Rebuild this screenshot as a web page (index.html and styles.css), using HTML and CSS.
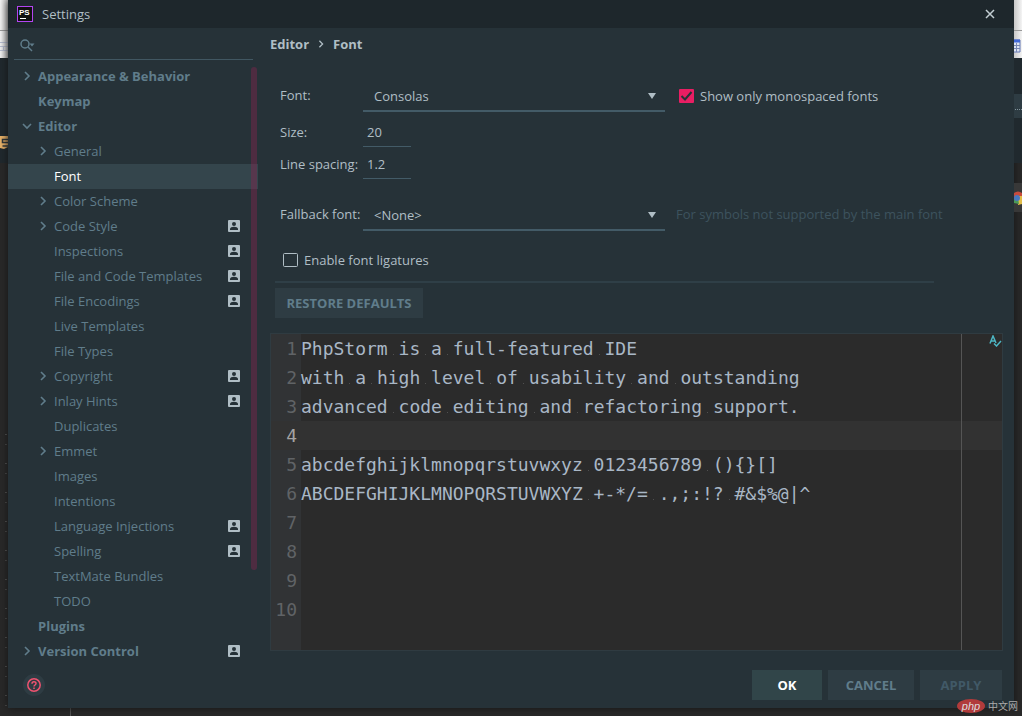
FILE: index.html
```html
<!DOCTYPE html>
<html lang="en">
<head>
<meta charset="utf-8">
<title>Settings</title>
<link rel="stylesheet" href="styles.css">
</head>
<body>
<svg class="defs" width="0" height="0" aria-hidden="true">
  <symbol id="right" viewBox="0 0 10 10"><path d="M3 1l4 4-4 4" fill="none" stroke="currentColor" stroke-width="1.6"/></symbol>
  <symbol id="down" viewBox="0 0 10 10"><path d="M1 3l4 4 4-4" fill="none" stroke="currentColor" stroke-width="1.6"/></symbol>
  <symbol id="user" viewBox="0 0 12 12"><rect width="12" height="12" rx="1" fill="#b0bec5"/><circle cx="6" cy="4" r="2" fill="#263238"/><path d="M2 10V9c0-1.500 2-2.200 4-2.200S10 7.500 10 9v1z" fill="#263238"/></symbol>
  <symbol id="arrow" viewBox="0 0 8 6"><path d="M0 0h8L4 6z" fill="#b0bec5"/></symbol>
</svg>

<div class="desktop">
  <div class="edge left">
    <div class="sheet"><svg width="8" height="58"><path d="M0 42.500h8M0 46.500h8M0 50.500h8M3.500 46v5" stroke="#b7bdd0" fill="none"/><path d="M0 30.500h8" stroke="#999"/></svg></div>
    <div class="panel"><svg width="8" height="16" viewBox="0 0 8 16"><path d="M0 1h8v11l-4 2-4-1z" fill="#e8b269"/><path d="M8 4.500H2.500v3H8M2.500 11H8" stroke="#30373b" stroke-width="1.500" fill="none"/></svg></div>
    <div class="stripes"></div>
  </div>

  <main class="dialog">
    <header class="title">
      <svg width="16" height="16" viewBox="0 0 16 16" font-family="Liberation Sans" aria-hidden="true"><rect x=".5" y=".5" width="15" height="15" fill="#111" stroke="#b345f1"/><text x="2" y="9" font-size="8" font-weight="700" fill="#fff">PS</text><path d="M3 12.500h6" stroke="#fff"/></svg>
      <h1>Settings</h1>
      <button class="close" aria-label="Close"><svg width="10" height="10" viewBox="0 0 10 10"><path d="M1 1l8 8M9 1L1 9" stroke="#c3ced3" stroke-width="1.500"/></svg></button>
    </header>

    <div class="columns">
      <aside class="side">
        <label class="search">
          <svg width="16" height="14" viewBox="0 0 16 14" fill="none" stroke="#607d8b" stroke-width="1.500"><circle cx="5" cy="5" r="4"/><path d="M8 8l4 4"/><path d="M9.500 4.500h5L12 7.500z" fill="#607d8b" stroke="none"/></svg>
          <input type="search" aria-label="Search settings">
        </label>
        <div class="treewrap">
          <ul class="tree">
            <li class="top"><svg><use href="#right"/></svg><span>Appearance &amp; Behavior</span></li>
            <li class="top"><i></i><span>Keymap</span></li>
            <li class="top"><svg><use href="#down"/></svg><span>Editor</span></li>
            <li><svg><use href="#right"/></svg><span>General</span></li>
            <li class="current"><i></i><span>Font</span></li>
            <li><svg><use href="#right"/></svg><span>Color Scheme</span></li>
            <li><svg><use href="#right"/></svg><span>Code Style</span><svg class="user"><use href="#user"/></svg></li>
            <li><i></i><span>Inspections</span><svg class="user"><use href="#user"/></svg></li>
            <li><i></i><span>File and Code Templates</span><svg class="user"><use href="#user"/></svg></li>
            <li><i></i><span>File Encodings</span><svg class="user"><use href="#user"/></svg></li>
            <li><i></i><span>Live Templates</span></li>
            <li><i></i><span>File Types</span></li>
            <li><svg><use href="#right"/></svg><span>Copyright</span><svg class="user"><use href="#user"/></svg></li>
            <li><svg><use href="#right"/></svg><span>Inlay Hints</span><svg class="user"><use href="#user"/></svg></li>
            <li><i></i><span>Duplicates</span></li>
            <li><svg><use href="#right"/></svg><span>Emmet</span></li>
            <li><i></i><span>Images</span></li>
            <li><i></i><span>Intentions</span></li>
            <li><i></i><span>Language Injections</span><svg class="user"><use href="#user"/></svg></li>
            <li><i></i><span>Spelling</span><svg class="user"><use href="#user"/></svg></li>
            <li><i></i><span>TextMate Bundles</span></li>
            <li><i></i><span>TODO</span></li>
            <li class="top"><i></i><span>Plugins</span></li>
            <li class="top"><svg><use href="#right"/></svg><span>Version Control</span><svg class="user"><use href="#user"/></svg></li>
          </ul>
          <div class="thumb"></div>
        </div>
      </aside>

      <section class="content">
        <nav class="crumbs"><span>Editor</span><svg width="8" height="8"><use href="#right"/></svg><span>Font</span></nav>

        <form class="form">
          <div class="row wide">
            <label for="font">Font:</label>
            <div class="select"><select id="font"><option>Consolas</option></select><svg><use href="#arrow"/></svg></div>
            <label class="check"><input type="checkbox" checked><svg width="15" height="14" viewBox="0 0 15 14"><rect width="15" height="14" rx="1" fill="#e91e63"/><path d="M2.500 7l3.500 3.500L12.500 3" fill="none" stroke="#263238" stroke-width="2"/></svg>Show only monospaced fonts</label>
          </div>
          <div class="row"><label for="size">Size:</label><input class="num" id="size" value="20"></div>
          <div class="row"><label for="spacing">Line spacing:</label><input class="num" id="spacing" value="1.2"></div>
          <div class="row wide fallback">
            <label for="fallback">Fallback font:</label>
            <div class="select"><select id="fallback"><option>&lt;None&gt;</option></select><svg><use href="#arrow"/></svg></div>
            <span class="hint">For symbols not supported by the main font</span>
          </div>
          <label class="check liga"><input type="checkbox"><svg width="15" height="14" viewBox="0 0 15 14"><rect x=".5" y=".5" width="14" height="13" rx="1" fill="none" stroke="#b0bec5"/></svg>Enable font ligatures</label>
        </form>
        <hr class="rule">
        <button class="btn restore">RESTORE DEFAULTS</button>

        <div class="editor">
          <ol class="code">
            <li>PhpStorm<s> </s>is<s> </s>a<s> </s>full-featured<s> </s>IDE</li>
            <li>with<s> </s>a<s> </s>high<s> </s>level<s> </s>of<s> </s>usability<s> </s>and<s> </s>outstanding</li>
            <li>advanced<s> </s>code<s> </s>editing<s> </s>and<s> </s>refactoring<s> </s>support.</li>
            <li class="caret"></li>
            <li>abcdefghijklmnopqrstuvwxyz<s> </s>0123456789<s> </s>(){}[]</li>
            <li>ABCDEFGHIJKLMNOPQRSTUVWXYZ<s> </s>+-*/=<s> </s>.,;:!?<s> </s>#&amp;$%@|^</li>
            <li></li><li></li><li></li><li></li>
          </ol>
          <div class="margin"></div>
          <svg class="inspect" width="13" height="12" viewBox="0 0 13 12" fill="none" stroke="#4db6c4" stroke-width="1.500"><path d="M1 8.500L4 1l3 7M2 6h4M5 8.500l2.500 2.500L12 6"/></svg>
        </div>
      </section>
    </div>

    <footer class="foot">
      <button class="help" aria-label="Help"><svg width="14" height="14" viewBox="0 0 14 14" fill="none" stroke="#ef5370" stroke-width="1.500"><circle cx="7" cy="7" r="6.200"/><path d="M5 5.700C5 3 9 3 9 5.500 9 7 7 7 7 8.500M7 9.600V11"/></svg></button>
      <div class="actions">
        <button class="btn ok">OK</button>
        <button class="btn cancel">CANCEL</button>
        <button class="btn apply" disabled>APPLY</button>
      </div>
    </footer>
  </main>

  <div class="edge right">
    <div class="sheet"><svg width="8" height="58"><path d="M0 30.500h8" stroke="#999"/><path d="M0 40h6v12H0" fill="#dce3f2" stroke="#6478b5"/><path d="M0 41h6" stroke="#4169d8" stroke-width="3"/><path d="M0 45.500h6M0 48.500h6M2.500 43v9" stroke="#7888b5"/></svg></div>
    <div class="panel"><div class="bar"></div></div>
    <div class="browser"><svg width="8" height="14" viewBox="0 0 8 14"><path d="M0 2Q4-1 8 2v5H0z" fill="#c74b3c"/><path d="M4 5h4v8l-4 1z" fill="#e2bd48"/><path d="M0 7h4l1 6-5-1z" fill="#4c9a58"/><circle cx="3" cy="7" r="3" fill="#4778c0"/></svg></div>
  </div>
</div>
<div class="below"></div>
<div class="mark"><b>php</b><span lang="zh">中文网</span></div>
</body>
</html>
```
FILE: styles.css
```css
*, *::before, *::after { box-sizing: border-box; }
body {
  margin: 0;
  background: #292929;
  color: #b0bec5;
  font: 13px/20px "Open Sans", "Noto Sans CJK SC", sans-serif;
}
button, input, select { font: inherit; color: inherit; border: 0; background: none; padding: 0; margin: 0; outline: 0; }
svg { display: block; flex: none; }
.defs { position: absolute; }

.desktop { display: grid; grid-template-columns: 8px minmax(0, 1fr) 8px; min-height: calc(100vh - 8px); }
.edge { display: flex; flex-direction: column; }
.sheet { height: 58px; background: linear-gradient(90deg, #f4f4f4, #c8c8c8); }
.right .sheet { background: linear-gradient(90deg, #c8c8c8, #f4f4f4); }
.panel { height: 105px; background: #20292e; }
.left .panel { padding-top: 77px; }
.right .panel { padding-top: 36px; }
.bar { height: 24px; background: #2e3c43; }
.bar::after { content: ""; display: block; width: 7px; height: 16px; margin-left: 1px; border-bottom: 1px dotted #83949c; }
.stripes {
  flex: 1;
  margin-top: 268px;
  background: repeating-linear-gradient(#555 0 1px, transparent 1px 10px, #4b4b4b 10px 11px, transparent 11px 29px) 5px 3px / 2px 100% no-repeat;
}
.browser { margin-top: 20px; height: 29px; padding-top: 8px; background: #383838; }
.below { height: 8px; margin-left: 70px; border-left: 1px solid #555; }

.dialog { display: flex; flex-direction: column; background: #263238; box-shadow: 0 0 8px #151515; }
.title { display: flex; align-items: center; gap: 9px; height: 28px; padding: 0 19px 0 9px; background: #1e272c; }
h1 { flex: 1; margin: 0; font-size: 13px; font-weight: 400; }
.columns { flex: 1; display: grid; grid-template-columns: 250px minmax(0, 1fr); }
.side { display: flex; flex-direction: column; }
.search { display: flex; align-items: center; height: 32px; margin: 0 5px 4px 6px; padding: 5px 0 0 6px; border-bottom: 1px solid #415762; }
.search input { flex: 1; min-width: 0; appearance: none; }
.treewrap { position: relative; }
.tree { list-style: none; margin: 0; padding: 0; color: #607d8b; }
.tree li { display: flex; align-items: center; gap: 6px; height: 25px; padding: 0 18px 1px 30px; }
.tree li.top { padding-left: 14px; font-weight: 700; }
.tree span { flex: 1; }
.tree i, .tree svg { width: 10px; height: 10px; flex: none; }
.tree .user { width: 12px; height: 12px; }
.tree .current { background: #34454c; color: #fff; }
.thumb { position: absolute; right: 1px; top: 3px; width: 6px; height: 503px; border-radius: 3px; background: rgba(140, 35, 80, .4); }

.content { display: flex; flex-direction: column; padding: 0 11px 13px 12px; }
.crumbs { display: flex; align-items: center; gap: 8px; height: 20px; margin-top: 6px; font-weight: 700; }
.form { padding-left: 10px; margin-top: 26px; }
.row { display: flex; height: 32px; }
.row > label:first-child { width: 83px; padding-top: 7px; white-space: nowrap; }
.row.wide { margin-bottom: 3px; }
.row.wide > label:first-child { padding-top: 5px; }
.row.fallback { margin: 20px 0 0; }
.select { position: relative; width: 302px; height: 32px; border-bottom: 2px solid #435b67; }
.select select { width: 100%; height: 30px; padding: 1px 30px 0 11px; appearance: none; }
.select svg { position: absolute; right: 9px; top: 13px; width: 8px; height: 6px; }
.num { width: 48px; padding: 3px 4px 0; border-bottom: 1px solid #435b67; }
.check { display: flex; align-items: center; gap: 6px; white-space: nowrap; }
.row .check { margin-left: 14px; }
.check input { position: absolute; opacity: 0; width: 15px; height: 14px; }
.hint { margin-left: 11px; padding-top: 5px; color: #3d535e; white-space: nowrap; }
.liga { height: 20px; margin: 19px 0 0 3px; }
.rule { width: auto; height: 2px; margin: 11px 69px 5px 5px; border: 0; background: #2f3f47; }
.btn { height: 30px; background: #2e3c43; font-weight: 700; color: #607d8b; }
.restore { align-self: flex-start; width: 148px; margin: 0 0 15px 5px; }

.editor { position: relative; flex: 1; border: 1px solid #2f3b41; background: linear-gradient(90deg, #313335 30px, #2b2b2b 30px); }
.code { list-style: none; counter-reset: line; margin: 0; padding: 0; font: 18px/29px "DejaVu Sans Mono", monospace; color: #a9b7c6; }
.code li { display: flex; height: 29px; white-space: pre; counter-increment: line; }
.code li::before { content: counter(line); display: flex; justify-content: flex-end; width: 30px; padding-right: 4px; color: #606366; flex: none; }
.code .caret { background: #323232; }
.code .caret::before { color: #a4a3a3; }
.code s { text-decoration: none; background: linear-gradient(#505050, #505050) 5px 20px / 1px 1px no-repeat; }
.margin { position: absolute; right: 40px; top: 0; bottom: 0; width: 1px; background: #555; }
.inspect { position: absolute; right: 0; top: 1px; }

.foot { display: flex; justify-content: space-between; height: 44px; padding: 0 12px 0 15px; }
.foot > * { margin-top: 6px; }
.help { display: grid; place-items: center; width: 22px; height: 22px; border-radius: 11px; background: #2e3c43; }
.foot .help { margin-top: 10px; }
.actions { display: flex; gap: 6px; }
.ok { width: 70px; background: #314549; color: #fff; }
.cancel { width: 86px; }
.apply { width: 82px; color: #415967; }

.mark { position: absolute; right: 4px; bottom: 3px; display: flex; align-items: center; gap: 3px; height: 15px; color: #aaa; }
.mark b { width: 28px; border-radius: 50%; background: #b13b3b; color: #ddd; font: italic 11px/14px "Liberation Sans", sans-serif; text-align: center; }
.mark span { font: 10px/14px "Noto Sans CJK SC", sans-serif; }
```
